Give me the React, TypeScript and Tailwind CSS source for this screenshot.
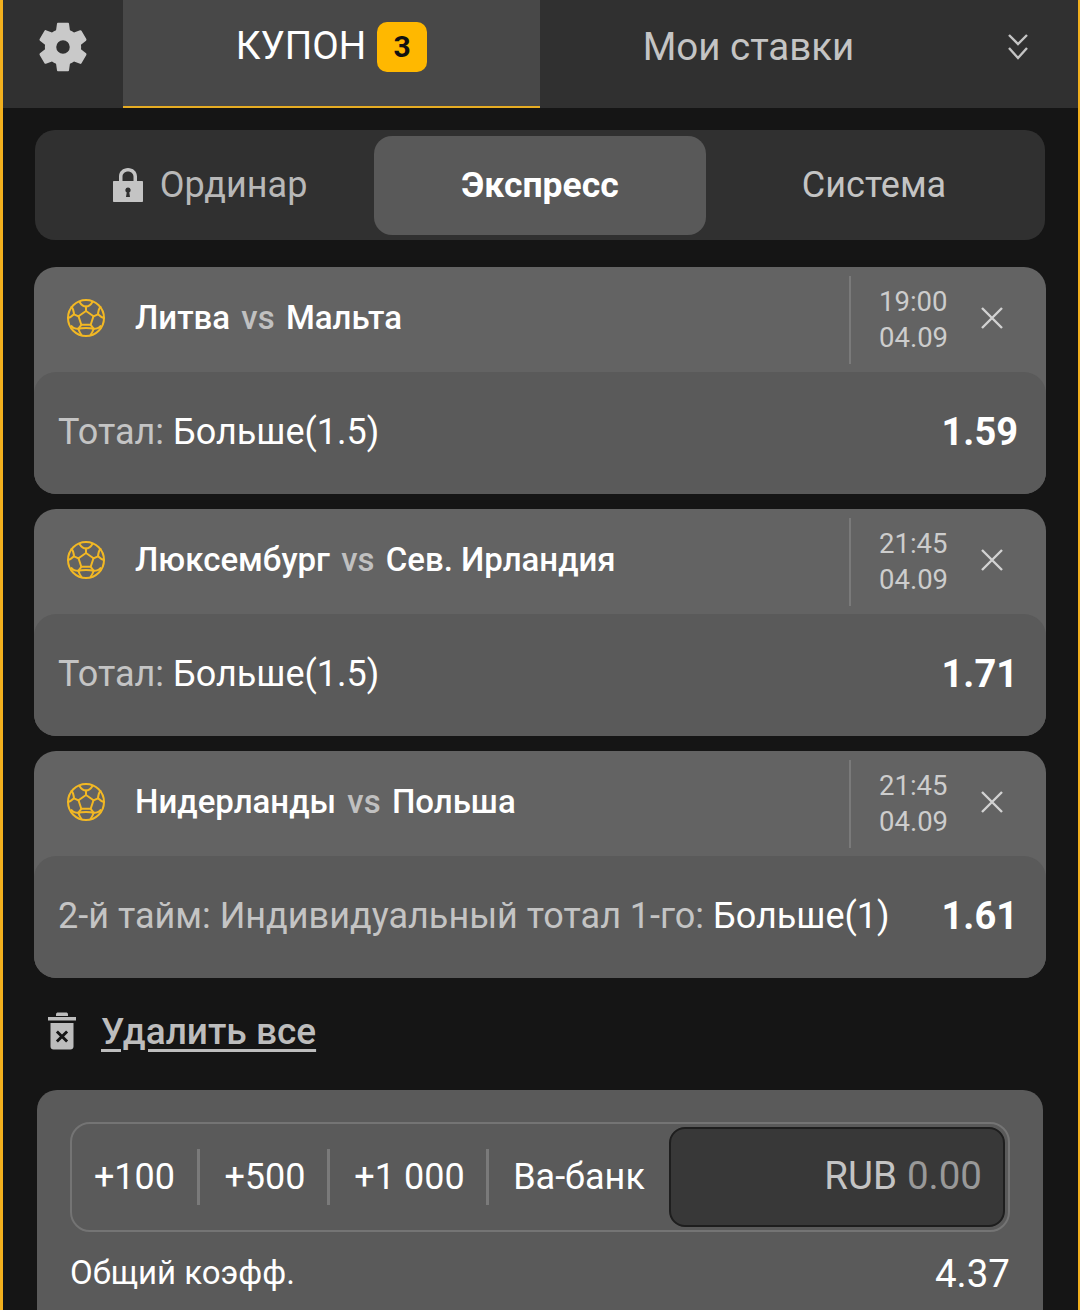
import React from "react";

const font = { fontFamily: "Roboto, sans-serif" };

function Ball() {
  return (
    <svg width="40" height="40" viewBox="0 0 40 40" fill="none" stroke="#f2b824" strokeWidth="2" strokeLinejoin="round" strokeLinecap="round">
      <circle cx="20" cy="20" r="18" />
      <path d="M20 13l7.500 5.300-2.800 8.500h-9.400l-2.800-8.500z" />
      <path d="M20 13V8.500M27.500 18.300l4.500-2M24.700 26.800l3 4M15.300 26.800l-3 4M12.500 18.300l-4.500-2" />
      <path d="M13.500 4C15.500 7.300 17.500 8.500 20 8.500s4.500-1.200 6.500-4.500" />
      <path d="M32 16.300C32.300 13 33 10.500 34.500 9M32 16.300C33.800 18 35.800 19.500 37.800 20" />
      <path d="M8 16.300C7.700 13 7 10.500 5.500 9M8 16.300C6.200 18 4.200 19.500 2.200 20" />
      <path d="M27.700 30.800C30.500 30.800 33.500 29.500 34.500 28M27.700 30.800C27 33 26 35 24.500 37" />
      <path d="M12.300 30.800C9.500 30.800 6.500 29.500 5.500 28M12.300 30.800C13 33 14 35 15.500 37" />
      <path d="M12.300 30.800C16 29.600 24 29.600 27.700 30.800" />
    </svg>
  );
}

function Close() {
  return (
    <svg width="24" height="24" viewBox="0 0 24 24" fill="none" stroke="#d2d2d2" strokeWidth="2.400">
      <path d="M2 2l20 20M22 2L2 22" />
    </svg>
  );
}

function Gear() {
  return (
    <svg width="58" height="58" viewBox="0 0 24 24" fill="#c9c9c9">
      <path fillRule="evenodd" d="M19.430 12.980c.04-.32.07-.64.07-.98s-.03-.66-.07-.98l2.110-1.650c.19-.15.240-.42.120-.64l-2-3.460c-.12-.22-.39-.3-.61-.22l-2.490 1c-.52-.4-1.080-.73-1.690-.98l-.38-2.650C14.460 2.180 14.250 2 14 2h-4c-.25 0-.46.180-.49.420l-.38 2.650c-.61.25-1.170.59-1.690.98l-2.490-1c-.23-.09-.49 0-.61.220l-2 3.460c-.13.220-.07.490.12.640l2.110 1.650c-.04.32-.07.650-.07.980s.03.660.07.980l-2.110 1.650c-.19.150-.24.420-.12.640l2 3.460c.12.220.39.300.61.220l2.490-1c.52.400 1.080.730 1.690.980l.38 2.650c.03.240.24.420.49.420h4c.25 0 .46-.180.49-.420l.38-2.650c.61-.250 1.170-.590 1.690-.980l2.490 1c.23.090.49 0 .61-.220l2-3.460c.12-.220.07-.490-.12-.640l-2.110-1.650zM12 14.800a2.800 2.800 0 1 1 0-5.600 2.800 2.800 0 0 1 0 5.600z" />
    </svg>
  );
}

function Chevrons() {
  return (
    <svg width="24" height="28" viewBox="0 0 24 28" fill="none" stroke="#c4c4c4" strokeWidth="2.400">
      <path d="M3 2l9 9 9-9M3 15l9 10 9-10" />
    </svg>
  );
}

function Lock() {
  return (
    <svg width="32" height="36" viewBox="0 0 32 36" fill="#c4c4c4">
      <path fillRule="evenodd" d="M7 14V9.500C7 4.500 11 1 16 1s9 3.500 9 8.500V14h5c.6 0 1 .4 1 1v19c0 .6-.4 1-1 1H2c-.6 0-1-.4-1-1V15c0-.6.4-1 1-1h5zm3.500 0h11V9.500C21.500 6.500 19 4.400 16 4.400s-5.500 2.100-5.500 5.100V14zM16 20.500a2.600 2.600 0 0 0-1.300 4.900L14 30h4l-.7-4.600a2.600 2.600 0 0 0-1.300-4.900z" />
    </svg>
  );
}

function Trash() {
  return (
    <svg width="28" height="38" viewBox="0 0 28 38" fill="#bdbdbd">
      <path d="M0 5h28v3.500H0zM8 2.500C8 1 9 .5 10 .5h8c1 0 2 .5 2 2V4H8z" />
      <path fillRule="evenodd" d="M2.500 11h23v23.500c0 2-1.300 3-3 3h-17c-1.700 0-3-1-3-3V11zm7.400 7.500l-2 2 4 4-4 4 2 2 4.100-4 4.100 4 2-2-4-4 4-4-2-2-4.100 4-4.100-4z" />
    </svg>
  );
}

function Card({ a, b, time, date, market, pick, odd }: { a: string; b: string; time: string; date: string; market: string; pick: string; odd: string }) {
  return (
    <div className="w-[1012px] rounded-[22px] bg-[#636363]">
      <div className="flex h-[105px] items-center pl-[32px]">
        <div className="flex pb-[4px]"><Ball /></div>
        <div className="ml-[29px] flex-1 pb-[4px] text-[33px] font-medium leading-none text-white">
          {a} <span className="mx-[3px] text-[#c0c0c0]">vs</span> {b}
        </div>
        <div className="h-[88px] w-[2px] bg-[#7a7a7a]" />
        <div className="ml-[28px] w-[70px] text-[27.500px] leading-[36px] text-[#cdcdcd]">
          <div>{time}</div>
          <div>{date}</div>
        </div>
        <div className="ml-[31px] mr-[42px] flex pb-[4px]"><Close /></div>
      </div>
      <div className="flex h-[122px] items-center justify-between rounded-[22px] bg-[#5a5a5a] pb-[2px] pl-[24px] pr-[28px] text-[36px] leading-none">
        <div><span className="text-[#c4c4c4]">{market}</span> <span className="text-white">{pick}</span></div>
        <div className="text-[38px] font-bold text-white">{odd}</div>
      </div>
    </div>
  );
}

export default function App() {
  return (
    <div style={font} className="h-[1310px] w-[1080px] overflow-hidden border-l-[3px] border-r-[2px] border-[#f2b01e] bg-[#151515]">
      <div className="flex h-[108px] bg-[#303030]">
        <div className="flex w-[120px] items-center justify-center pb-[14px]"><Gear /></div>
        <div className="flex h-[108px] w-[417px] items-center justify-center gap-[11px] border-b-2 border-[#e6ac23] bg-[#484848] pb-[13px]">
          <span className="text-[38.500px] leading-none text-white">КУПОН</span>
          <span className="flex h-[50px] w-[50px] items-center justify-center rounded-[10px] bg-[#ffb800] text-[30px] font-bold leading-none text-[#111]">3</span>
        </div>
        <div className="flex flex-1 items-center justify-center pb-[14px] pr-[106px] text-[38.500px] leading-none text-[#c4c4c4]">
          <span className="ml-[57px]">Мои ставки</span>
        </div>
        <div className="mr-[48px] flex items-center pb-[14px]"><Chevrons /></div>
      </div>

      <div className="ml-[32px] mt-[22px] flex h-[110px] w-[1010px] rounded-[20px] bg-[#303030] p-[6px]">
        <div className="flex w-[333px] items-center justify-center gap-[16px] pl-[4px] text-[36px] leading-none text-[#b8b8b8]">
          <Lock />
          <span>Ординар</span>
        </div>
        <div className="flex h-[99px] w-[332px] items-center justify-center rounded-[18px] bg-[#595959] text-[35.500px] font-bold leading-none text-white">Экспресс</div>
        <div className="flex flex-1 items-center justify-center pl-[3px] text-[36px] leading-none text-[#c4c4c4]">Система</div>
      </div>

      <div className="ml-[31px] mt-[27px] flex flex-col gap-[15px]">
        <Card a="Литва" b="Мальта" time="19:00" date="04.09" market="Тотал:" pick="Больше(1.5)" odd="1.59" />
        <Card a="Люксембург" b="Сев. Ирландия" time="21:45" date="04.09" market="Тотал:" pick="Больше(1.5)" odd="1.71" />
        <Card a="Нидерланды" b="Польша" time="21:45" date="04.09" market="2-й тайм: Индивидуальный тотал 1-го:" pick="Больше(1)" odd="1.61" />
      </div>

      <div className="ml-[45px] mt-[32px] flex items-center gap-[25px]">
        <div className="flex pb-[2px]"><Trash /></div>
        <span className="text-[37px] font-medium leading-[44px] text-[#bdbdbd] underline decoration-[3px] underline-offset-[5px]">Удалить все</span>
      </div>

      <div className="ml-[34px] mt-[36px] w-[1006px] rounded-t-[20px] bg-[#5a5a5a] px-[33px] pt-[32px]">
        <div className="flex h-[110px] items-center rounded-[20px] border-2 border-[#747474] pr-[3px] text-[36px] leading-none text-white">
          <div className="flex h-[56px] w-[128px] items-center justify-center border-r-[3px] border-[#7a7a7a]">+100</div>
          <div className="flex h-[56px] w-[130px] items-center justify-center border-r-[3px] border-[#7a7a7a] pl-[3px]">+500</div>
          <div className="flex h-[56px] w-[159px] items-center justify-center border-r-[3px] border-[#7a7a7a] pl-[3px]">+1 000</div>
          <div className="flex w-[180px] items-center justify-center">Ва-банк</div>
          <div className="flex h-[100px] flex-1 items-center justify-end rounded-[16px] border-2 border-[#1e1e1e] bg-[#383838] pb-[2px] pr-[21px] text-[38.500px]">
            <span className="text-[#c4c4c4]">RUB</span><span className="ml-[10px] text-[#999]">0.00</span>
          </div>
        </div>
        <div className="mt-[21px] flex items-start justify-between text-[33px] leading-[40px] text-white">
          <span>Общий коэфф.</span>
          <span className="mt-[1px] text-[38.500px]">4.37</span>
        </div>
        <div className="mt-[11px] text-[33px] leading-[40px] text-white">Оптимальный выигрыш</div>
      </div>
    </div>
  );
}
